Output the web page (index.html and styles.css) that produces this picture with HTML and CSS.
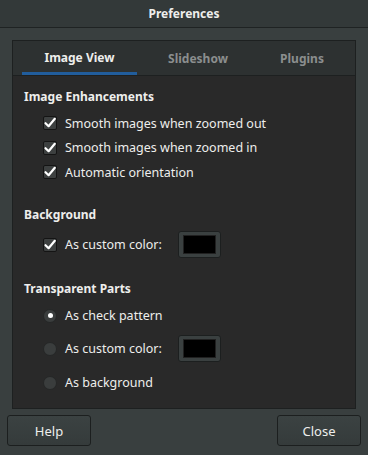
FILE: index.html
```html
<!DOCTYPE html>
<html>
<head>
<meta charset="utf-8">
<link rel="stylesheet" href="styles.css">
</head>
<body>
<div class="window">
  <div class="titlebar">Preferences</div>
  <div class="main">
    <div class="notebook">
      <div class="tabs">
        <div class="tab tab1 active">Image View</div>
        <div class="tab tab2">Slideshow</div>
        <div class="tab tab3">Plugins</div>
      </div>
      <div class="page">
        <div class="heading">Image Enhancements</div>
        <div class="row"><span class="check on"><svg width="14" height="14" viewBox="0 0 14 14"><path d="M2.5 7.2 L5.6 10.2 L11.8 2.8" fill="none" stroke="#ffffff" stroke-width="2.2" stroke-linecap="round" stroke-linejoin="round"/></svg></span><span>Smooth images when zoomed out</span></div>
        <div class="row"><span class="check on"><svg width="14" height="14" viewBox="0 0 14 14"><path d="M2.5 7.2 L5.6 10.2 L11.8 2.8" fill="none" stroke="#ffffff" stroke-width="2.2" stroke-linecap="round" stroke-linejoin="round"/></svg></span><span>Smooth images when zoomed in</span></div>
        <div class="row"><span class="check on"><svg width="14" height="14" viewBox="0 0 14 14"><path d="M2.5 7.2 L5.6 10.2 L11.8 2.8" fill="none" stroke="#ffffff" stroke-width="2.2" stroke-linecap="round" stroke-linejoin="round"/></svg></span><span>Automatic orientation</span></div>

        <div class="heading h2">Background</div>
        <div class="row crow"><span class="check on"><svg width="14" height="14" viewBox="0 0 14 14"><path d="M2.5 7.2 L5.6 10.2 L11.8 2.8" fill="none" stroke="#ffffff" stroke-width="2.2" stroke-linecap="round" stroke-linejoin="round"/></svg></span><span class="lbl">As custom color:</span><span class="colorbtn"><span class="swatch"></span></span></div>

        <div class="heading h3">Transparent Parts</div>
        <div class="row rrow"><span class="radio on"><span class="dot"></span></span><span>As check pattern</span></div>
        <div class="row crow2"><span class="radio"></span><span class="lbl">As custom color:</span><span class="colorbtn"><span class="swatch"></span></span></div>
        <div class="row rrow3"><span class="radio"></span><span>As background</span></div>
      </div>
    </div>
    <div class="buttons">
      <div class="btn">Help</div>
      <div class="btn">Close</div>
    </div>
  </div>
</div>
</body>
</html>
```
FILE: styles.css
```css
html, body {
  margin: 0;
  padding: 0;
  background: #393f3f;
}
body {
  width: 368px;
  height: 455px;
  overflow: hidden;
  font-family: "Noto Sans", "DejaVu Sans", sans-serif;
  font-size: 12.5px;
  color: #eeeeec;
}
.window {
  display: flex;
  flex-direction: column;
  height: 455px;
}
.titlebar {
  height: 27px;
  line-height: 28px;
  background: #333939;
  border-bottom: 1px solid #1f2323;
  text-align: center;
  font-weight: bold;
  font-size: 12px;
  color: #eeeeec;
}
.main {
  padding: 12px 12px 0 12px;
}
.notebook {
  border: 1px solid #1d2020;
  height: 367px;
  display: flex;
  flex-direction: column;
  background: #292929;
}
.tabs {
  height: 34px;
  display: flex;
  padding-left: 9px;
  background: #2d3131;
  border-bottom: 1px solid #1d2020;
}
.tab {
  display: flex;
  align-items: center;
  justify-content: center;
  font-weight: bold;
  font-size: 12px;
  color: #8b8e8e;
  box-sizing: border-box;
  height: 34px;
  padding-top: 0px;
}
.tab.active {
  color: #eeeeec;
  border-bottom: 3px solid #215d9c;
  padding-top: 2px;
}
.tab1 { width: 115px; }
.tab2 { width: 122px; }
.tab3 { width: 86px; }
.page {
  padding: 11px 0 0 11px;
  display: flex;
  flex-direction: column;
}
.heading {
  font-weight: bold;
  font-size: 12px;
  height: 20px;
  line-height: 20px;
  margin-bottom: 4px;
}
.h2 { margin-top: 20px; }
.h3 { margin-top: 19px; }
.row {
  display: flex;
  align-items: center;
  height: 24.5px;
  padding-left: 19px;
}
.check {
  width: 14px;
  height: 14px;
  box-sizing: border-box;
  border: 1px solid #141414;
  background: #3d4040;
  border-radius: 2px;
  margin-right: 8px;
  display: flex;
  align-items: center;
  justify-content: center;
  overflow: visible;
}
.check svg { flex: none; }
.radio {
  width: 14px;
  height: 14px;
  box-sizing: border-box;
  border-radius: 50%;
  background: #3a3d3d;
  border: 1px solid #252727;
  margin-right: 8px;
  display: flex;
  align-items: center;
  justify-content: center;
}
.dot {
  width: 5px;
  height: 5px;
  border-radius: 50%;
  background: #ffffff;
}
.crow {
  height: 30px;
  margin-top: 1px;
}
.rrow { height: 24px; margin-top: 1px; }
.crow2 { height: 32px; margin-top: 5px; }
.rrow3 { height: 30px; margin-top: 3px; }
.lbl { width: 113px; }
.colorbtn {
  width: 43px;
  height: 27px;
  box-sizing: border-box;
  border: 1px solid #1c1f1f;
  border-radius: 3px;
  background: #3a4040;
  display: flex;
  align-items: center;
  justify-content: center;
}
.swatch {
  width: 31px;
  height: 17px;
  background: #000000;
  border: 1px solid #202020;
}
.buttons {
  display: flex;
  justify-content: space-between;
  margin: 6px -5px 0 -5px;
}
.btn {
  width: 84px;
  height: 31px;
  box-sizing: border-box;
  border: 1px solid #1c1f1f;
  border-radius: 3px;
  background: linear-gradient(#3b4242, #353b3b);
  display: flex;
  align-items: center;
  justify-content: center;
  color: #eeeeec;
  font-size: 13px;
}
```
